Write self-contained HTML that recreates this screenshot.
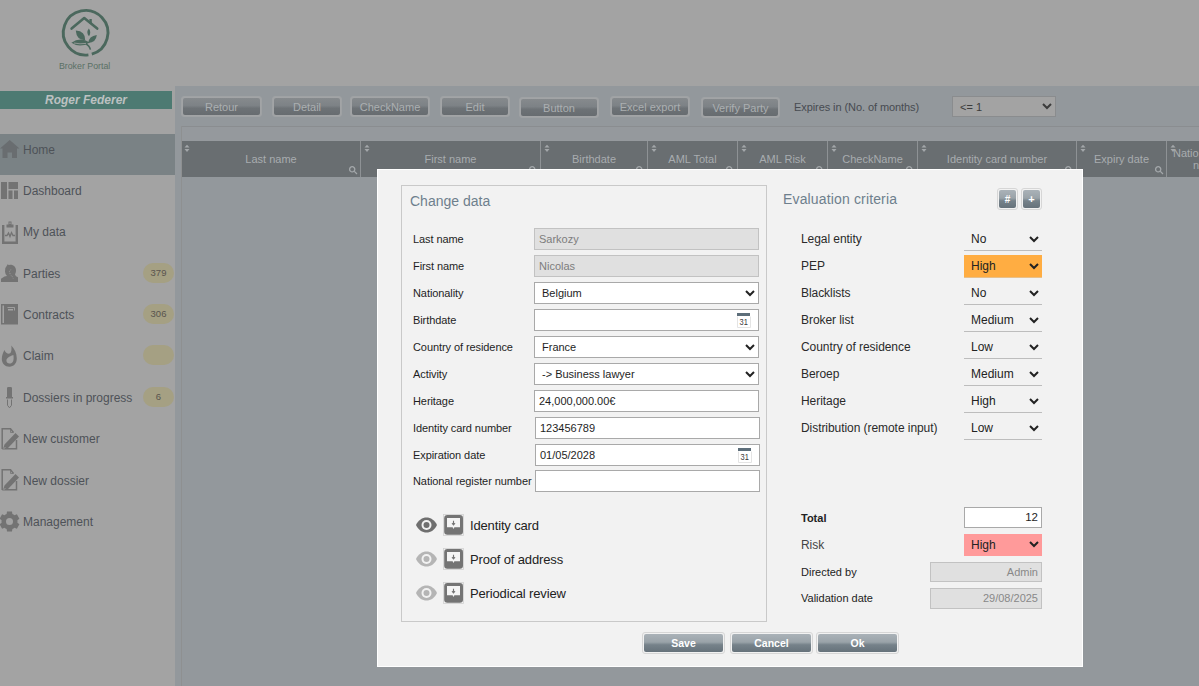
<!DOCTYPE html>
<html><head><meta charset="utf-8">
<style>
*{box-sizing:border-box;margin:0;padding:0}
html,body{width:1199px;height:686px;overflow:hidden}
body{position:relative;background:#a3a3a3;font-family:"Liberation Sans",sans-serif;color:#222}
.a{position:absolute}
svg{position:absolute;display:block}
/* sidebar */
.teal{left:0;top:91px;width:172px;height:18px;background:#4d7a72;color:#bcc1c1;font-weight:bold;font-style:italic;font-size:12px;line-height:18px;text-align:center}
.homerow{left:0;top:134px;width:175px;height:41px;background:#7a8285}
.mi{left:23px;font-size:12px;color:#4e5258;white-space:nowrap}
.badge{left:143px;width:31px;height:20px;border-radius:10px;background:#a5a083;color:#58544e;font-size:9.5px;line-height:19px;text-align:center}
/* content */
.content{left:175px;top:86px;width:1024px;height:600px;background:#93989c}
.tb{height:21px;border-radius:3px;border:1px solid #9fa2a4;padding:1px;background:#a2a4a6}.tb div{width:100%;height:100%;border-radius:2px;background:linear-gradient(#868a8d,#7d8286 45%,#6d7276 60%,#676c70);color:#abafb1;font-size:11px;line-height:18px;text-align:center;white-space:nowrap}
.tbar{left:181px;top:126px;width:1018px;height:15px;background:#95999d;border-top:1px solid #8a8d90;border-left:1px solid #8a8d90}
.thead{left:182px;top:141px;width:1017px;height:36px;background:#696e71}
.col{top:141px;height:36px;color:#a8acaf;font-size:11px;text-align:center;white-space:nowrap}
.div{top:141px;width:1px;height:36px;background:#8e9295}
/* modal */
.modal{left:377px;top:169px;width:706px;height:498px;background:#f2f2f2;border:1px solid #fff}
.fs{left:401px;top:185px;width:366px;height:437px;border:1px solid #c9c9c9}
.h{font-size:14px;color:#6e7f8d;white-space:nowrap}
.lbl{left:413px;font-size:11px;letter-spacing:-0.08px;color:#1e1e1e;white-space:nowrap}
.inp{left:534px;width:225px;height:22px;background:#fff;border:1px solid #a9a9a9;font-size:11px;line-height:20px;padding-left:4px;color:#1e1e1e;white-space:nowrap}
.dis{background:#e0e0e0;border-color:#c2c2c2;color:#7d7d7d}
.sel{padding-left:7px}
.elbl{left:801px;font-size:12px;letter-spacing:-0.06px;color:#2a2a2a;white-space:nowrap}
.esel{left:964px;width:78px;height:23px;border-bottom:1px solid #bdbdbd;font-size:12px;line-height:22px;padding-left:7px;color:#222}
.btn{top:632px;width:83px;height:22px;border-radius:3px;border:1px solid #d6d6d6;padding:1px}
.btn div{width:100%;height:100%;border-radius:2px;background:linear-gradient(#aab2b8 0%,#9aa3a9 45%,#76828a 60%,#66727b 100%);color:#fff;font-weight:bold;font-size:10.5px;line-height:18px;text-align:center}
.doc{font-size:13px;letter-spacing:-0.15px;color:#222;white-space:nowrap;left:470px}
</style></head>
<body>
<!-- logo -->
<svg style="left:55px;top:5px" width="60" height="70" viewBox="0 0 60 70">
  <path d="M33.4 49.9 A22.3 22.3 0 1 1 36.8 49.2" fill="none" stroke="#4b685d" stroke-width="2.9"/>
  <path d="M16.6 23.6 L29.2 13 L42.2 23.6" fill="none" stroke="#4b685d" stroke-width="2.6" stroke-linecap="round" stroke-linejoin="round"/>
  <path d="M35.6 14 V18.5" fill="none" stroke="#4b685d" stroke-width="2.4"/>
  <g fill="#4b685d">
   <path d="M16.4 37.8 Q25 31.6 34.8 37.4 Q25 43.6 16.4 37.8 Z"/>
   <path d="M20.8 25.4 Q30.4 25.8 30.2 35.2 Q21.4 35 20.8 25.4 Z"/>
   <path d="M33.8 23.4 Q36.6 27 34 31.2 Q30.8 27.6 33.8 23.4 Z"/>
   <path d="M41.8 30 Q41.2 37.4 33.2 38 Q33.8 31.2 41.8 30 Z"/>
  </g>
  <path d="M20 38.2 Q26 36.2 30 38.2 Q34.6 40.6 35.4 44.6" fill="none" stroke="#4b685d" stroke-width="1.6"/>
  <path d="M19 38 Q25 39.4 31 38.4" fill="none" stroke="#a3a3a3" stroke-width="0.8"/>
  <text x="29.6" y="63.6" text-anchor="middle" font-family="Liberation Sans" font-size="8.8" fill="#5a7065">Broker Portal</text>
</svg>

<div class="a teal">Roger Federer</div>
<div class="a homerow"></div>

<!-- sidebar icons -->
<svg style="left:0;top:140px" width="20" height="19" viewBox="0 0 20 19"><path d="M0 8.5 L9.7 0 L19.5 8.5 L17 8.5 L17 18 L12 18 L12 12.5 L7.5 12.5 L7.5 18 L2.5 18 L2.5 8.5 Z" fill="#696d70"/></svg>
<div class="a mi" style="top:143px">Home</div>

<svg style="left:1px;top:182px" width="18" height="18" viewBox="0 0 18 18"><path d="M0 0H6V17H0Z M7.5 0H17V7H7.5Z M7.5 8.5H11.5V17H7.5Z M13 8.5H17V17H13Z" fill="#737373"/></svg>
<div class="a mi" style="top:184px">Dashboard</div>

<svg style="left:2px;top:221px" width="16" height="23" viewBox="0 0 16 23"><path d="M1.2 4V21.8H14.8V4" fill="none" stroke="#737373" stroke-width="2.4"/><path d="M4.5 3.5H11.5V6.5H4.5Z M6.5 0.5H9.5V3.5H6.5Z" fill="#737373"/><path d="M7.5 1.5H8.5V3H7.5Z" fill="#a3a3a3"/><path d="M3 14.5H5L6.5 12L8 15.5L9.5 11.5L11 14.5H13" fill="none" stroke="#737373" stroke-width="1.3"/></svg>
<div class="a mi" style="top:225px">My data</div>

<svg style="left:1px;top:264px" width="18" height="18" viewBox="0 0 18 18"><path d="M0 18V14.8L3.5 12.6L6 12Q4.2 10.5 4 7.5Q3.8 3.5 6 1.6L6.6 0.3L7.8 1Q9 0.6 10.5 0.8Q14.5 1.6 15 6Q15.2 8.5 14 10.5L15 12.3L17 13.3V18Z" fill="#737373"/><path d="M9.8 5.5L8.3 7.8L9.5 10.8L11.5 12.8L12.2 14.5" stroke="#a3a3a3" stroke-width="0.7" fill="none" stroke-dasharray="1.1 0.9"/></svg>
<div class="a mi" style="top:267px">Parties</div>
<div class="a badge" style="top:263px">379</div>

<svg style="left:1px;top:304px" width="18" height="21" viewBox="0 0 18 21"><path d="M0 0H17V20.5H0Z" fill="#737373"/><path d="M1.5 1.5H3V19H1.5Z" fill="#a3a3a3"/><path d="M6.5 3.5H13.5V6.5" stroke="#a3a3a3" stroke-width="0.9" fill="none"/><path d="M7 5H12V6.5H7Z" fill="#a3a3a3"/></svg>
<div class="a mi" style="top:308px">Contracts</div>
<div class="a badge" style="top:304px">306</div>

<svg style="left:1px;top:345px" width="17" height="22" viewBox="0 0 17 22"><path fill="#737373" fill-rule="evenodd" d="M10.3 0.6C13.5 4 15.8 8.5 15.8 13.5C15.8 18.5 12.5 21.7 8.5 21.7C4 21.7 0.8 18.5 0.8 14C0.8 10.5 2 7.5 3.5 5C4.5 7.5 6 8.8 7.8 8.8C9.8 8.8 11 6.5 10.3 0.6Z M12.4 9.9C12.8 12.5 12.6 15 12.2 16C11.5 17.8 10 18.6 8.6 18.6C6.8 18.6 5.4 17.3 5.4 15.5C5.4 13 8 11.5 12.4 9.9Z"/></svg>
<div class="a mi" style="top:349px">Claim</div>
<div class="a badge" style="top:345px"></div>

<svg style="left:5px;top:387px" width="9" height="22" viewBox="0 0 9 22"><path d="M2 10V1.2Q2 0 3.2 0H5.8Q7 0 7 1.2V10Z M1 10H8V11.5H1Z" fill="#737373"/><path d="M2.5 12.5V18.3L4.5 20.8L6.5 18.3V12.5" fill="none" stroke="#737373" stroke-width="1"/></svg>
<div class="a mi" style="top:391px">Dossiers in progress</div>
<div class="a badge" style="top:387px">6</div>

<svg style="left:1px;top:428px" width="18" height="22" viewBox="0 0 18 22"><path d="M1.2 21V0.8H9.5L12.5 4.5" fill="none" stroke="#737373" stroke-width="1.5"/><path d="M9.5 0.8V4.5H12.5" fill="none" stroke="#737373" stroke-width="0.8"/><path d="M15.5 12V20.8H1.2" fill="none" stroke="#737373" stroke-width="1.5"/><path d="M3.5 16.5L14.5 5L18 8.5L7 20Z M3.5 16.5L2.2 20.5L7 20" fill="#737373"/><path d="M2.5 21L4.5 19" stroke="#a3a3a3" stroke-width="0.8"/></svg>
<div class="a mi" style="top:432px">New customer</div>

<svg style="left:1px;top:469px" width="18" height="22" viewBox="0 0 18 22"><path d="M1.2 21V0.8H9.5L12.5 4.5" fill="none" stroke="#737373" stroke-width="1.5"/><path d="M9.5 0.8V4.5H12.5" fill="none" stroke="#737373" stroke-width="0.8"/><path d="M15.5 12V20.8H1.2" fill="none" stroke="#737373" stroke-width="1.5"/><path d="M3.5 16.5L14.5 5L18 8.5L7 20Z M3.5 16.5L2.2 20.5L7 20" fill="#737373"/><path d="M2.5 21L4.5 19" stroke="#a3a3a3" stroke-width="0.8"/></svg>
<div class="a mi" style="top:474px">New dossier</div>

<svg style="left:-1.2px;top:511px" width="21" height="21" viewBox="0 0 21 21"><path fill="#737373" fill-rule="evenodd" d="M7.63 3.03 L8.01 0.51 L12.99 0.51 L13.37 3.03 A8.0 8.0 0 0 1 15.53 4.28 L17.91 3.35 L20.40 7.66 L18.40 9.25 A8.0 8.0 0 0 1 18.40 11.75 L20.40 13.34 L17.91 17.65 L15.53 16.72 A8.0 8.0 0 0 1 13.37 17.97 L12.99 20.49 L8.01 20.49 L7.63 17.97 A8.0 8.0 0 0 1 5.47 16.72 L3.09 17.65 L0.60 13.34 L2.60 11.75 A8.0 8.0 0 0 1 2.60 9.25 L0.60 7.66 L3.09 3.35 L5.47 4.28 A8.0 8.0 0 0 1 7.63 3.03Z M10.5 7 A3.5 3.5 0 1 0 10.5 14 A3.5 3.5 0 1 0 10.5 7Z"/></svg>
<div class="a mi" style="top:515px">Management</div>

<!-- content -->
<div class="a content"></div>
<div class="a tb" style="left:181px;top:96px;width:81px"><div>Retour</div></div>
<div class="a tb" style="left:272px;top:96px;width:70px"><div>Detail</div></div>
<div class="a tb" style="left:350px;top:96px;width:80px"><div>CheckName</div></div>
<div class="a tb" style="left:440px;top:96px;width:70px"><div>Edit</div></div>
<div class="a tb" style="left:519px;top:97px;width:80px"><div>Button</div></div>
<div class="a tb" style="left:610px;top:96px;width:80px"><div>Excel export</div></div>
<div class="a tb" style="left:701px;top:97px;width:79px"><div>Verify Party</div></div>
<div class="a" style="left:794px;top:101px;font-size:11px;letter-spacing:-0.08px;color:#474b51;white-space:nowrap">Expires in (No. of months)</div>
<div class="a" style="left:952px;top:96px;width:104px;height:21px;background:#a3a3a3;border:1px solid #8a8c8e;font-size:11px;line-height:20px;padding-left:7px;color:#3c3c3c">&lt;= 1</div>
<svg style="left:1042px;top:103px" width="10" height="7" viewBox="0 0 10 7"><path d="M1 1L5 5L9 1" fill="none" stroke="#3c3c3c" stroke-width="2"/></svg>
<div class="a tbar"></div>
<div class="a" style="left:181px;top:126px;width:1px;height:560px;background:#8e9091"></div>
<div class="a thead"></div>
<div class="a col" style="left:182px;width:178px;top:153px">Last name</div>
<svg style="left:184px;top:144px" width="6" height="9" viewBox="0 0 6 9"><path d="M0.5 3.6L3 0.7L5.5 3.6Z M0.5 5.1L3 8L5.5 5.1Z" fill="#a3a7aa"/></svg>
<svg style="left:349px;top:166px" width="9" height="9" viewBox="0 0 9 9"><path d="M3.2 0.7A2.6 2.6 0 1 0 3.2 5.9A2.6 2.6 0 1 0 3.2 0.7Z M5.1 5.1L8 8" fill="none" stroke="#a3a7aa" stroke-width="1.3"/></svg>
<div class="a div" style="left:360px"></div>
<div class="a col" style="left:361px;width:179px;top:153px">First name</div>
<svg style="left:364px;top:144px" width="6" height="9" viewBox="0 0 6 9"><path d="M0.5 3.6L3 0.7L5.5 3.6Z M0.5 5.1L3 8L5.5 5.1Z" fill="#a3a7aa"/></svg>
<svg style="left:529px;top:166px" width="9" height="9" viewBox="0 0 9 9"><path d="M3.2 0.7A2.6 2.6 0 1 0 3.2 5.9A2.6 2.6 0 1 0 3.2 0.7Z M5.1 5.1L8 8" fill="none" stroke="#a3a7aa" stroke-width="1.3"/></svg>
<div class="a div" style="left:540px"></div>
<div class="a col" style="left:541px;width:106px;top:153px">Birthdate</div>
<svg style="left:544px;top:144px" width="6" height="9" viewBox="0 0 6 9"><path d="M0.5 3.6L3 0.7L5.5 3.6Z M0.5 5.1L3 8L5.5 5.1Z" fill="#a3a7aa"/></svg>
<svg style="left:636px;top:166px" width="9" height="9" viewBox="0 0 9 9"><path d="M3.2 0.7A2.6 2.6 0 1 0 3.2 5.9A2.6 2.6 0 1 0 3.2 0.7Z M5.1 5.1L8 8" fill="none" stroke="#a3a7aa" stroke-width="1.3"/></svg>
<div class="a div" style="left:647px"></div>
<div class="a col" style="left:648px;width:89px;top:153px">AML Total</div>
<svg style="left:651px;top:144px" width="6" height="9" viewBox="0 0 6 9"><path d="M0.5 3.6L3 0.7L5.5 3.6Z M0.5 5.1L3 8L5.5 5.1Z" fill="#a3a7aa"/></svg>
<svg style="left:726px;top:166px" width="9" height="9" viewBox="0 0 9 9"><path d="M3.2 0.7A2.6 2.6 0 1 0 3.2 5.9A2.6 2.6 0 1 0 3.2 0.7Z M5.1 5.1L8 8" fill="none" stroke="#a3a7aa" stroke-width="1.3"/></svg>
<div class="a div" style="left:737px"></div>
<div class="a col" style="left:738px;width:89px;top:153px">AML Risk</div>
<svg style="left:741px;top:144px" width="6" height="9" viewBox="0 0 6 9"><path d="M0.5 3.6L3 0.7L5.5 3.6Z M0.5 5.1L3 8L5.5 5.1Z" fill="#a3a7aa"/></svg>
<svg style="left:816px;top:166px" width="9" height="9" viewBox="0 0 9 9"><path d="M3.2 0.7A2.6 2.6 0 1 0 3.2 5.9A2.6 2.6 0 1 0 3.2 0.7Z M5.1 5.1L8 8" fill="none" stroke="#a3a7aa" stroke-width="1.3"/></svg>
<div class="a div" style="left:827px"></div>
<div class="a col" style="left:828px;width:89px;top:153px">CheckName</div>
<svg style="left:831px;top:144px" width="6" height="9" viewBox="0 0 6 9"><path d="M0.5 3.6L3 0.7L5.5 3.6Z M0.5 5.1L3 8L5.5 5.1Z" fill="#a3a7aa"/></svg>
<svg style="left:906px;top:166px" width="9" height="9" viewBox="0 0 9 9"><path d="M3.2 0.7A2.6 2.6 0 1 0 3.2 5.9A2.6 2.6 0 1 0 3.2 0.7Z M5.1 5.1L8 8" fill="none" stroke="#a3a7aa" stroke-width="1.3"/></svg>
<div class="a div" style="left:917px"></div>
<div class="a col" style="left:918px;width:158px;top:153px">Identity card number</div>
<svg style="left:921px;top:144px" width="6" height="9" viewBox="0 0 6 9"><path d="M0.5 3.6L3 0.7L5.5 3.6Z M0.5 5.1L3 8L5.5 5.1Z" fill="#a3a7aa"/></svg>
<svg style="left:1065px;top:166px" width="9" height="9" viewBox="0 0 9 9"><path d="M3.2 0.7A2.6 2.6 0 1 0 3.2 5.9A2.6 2.6 0 1 0 3.2 0.7Z M5.1 5.1L8 8" fill="none" stroke="#a3a7aa" stroke-width="1.3"/></svg>
<div class="a div" style="left:1076px"></div>
<div class="a col" style="left:1077px;width:89px;top:153px">Expiry date</div>
<svg style="left:1080px;top:144px" width="6" height="9" viewBox="0 0 6 9"><path d="M0.5 3.6L3 0.7L5.5 3.6Z M0.5 5.1L3 8L5.5 5.1Z" fill="#a3a7aa"/></svg>
<svg style="left:1155px;top:166px" width="9" height="9" viewBox="0 0 9 9"><path d="M3.2 0.7A2.6 2.6 0 1 0 3.2 5.9A2.6 2.6 0 1 0 3.2 0.7Z M5.1 5.1L8 8" fill="none" stroke="#a3a7aa" stroke-width="1.3"/></svg>
<div class="a div" style="left:1166px"></div>
<div class="a col" style="left:1173px;top:147px;text-align:left;line-height:12px">Nation<br><span style="padding-left:20px">number</span></div>
<svg style="left:1170px;top:144px" width="6" height="9" viewBox="0 0 6 9"><path d="M0.5 3.6L3 0.7L5.5 3.6Z M0.5 5.1L3 8L5.5 5.1Z" fill="#a3a7aa"/></svg>
<div class="a modal"></div>
<div class="a fs"></div>
<div class="a h" style="left:410px;top:193px">Change data</div>
<div class="a h" style="left:783px;top:191px;letter-spacing:0.15px">Evaluation criteria</div>
<div class="a lbl" style="top:233px">Last name</div>
<div class="a inp dis" style="left:534px;top:228px">Sarkozy</div>
<div class="a lbl" style="top:260px">First name</div>
<div class="a inp dis" style="left:534px;top:255px">Nicolas</div>
<div class="a lbl" style="top:287px">Nationality</div>
<div class="a inp sel" style="left:534px;top:282px">Belgium</div>
<svg style="left:745px;top:290px" width="10" height="7" viewBox="0 0 10 7"><path d="M1 1L5 5L9 1" fill="none" stroke="#222" stroke-width="2"/></svg>
<div class="a lbl" style="top:314px">Birthdate</div>
<div class="a inp" style="left:534px;top:309px"></div>
<svg style="left:737px;top:313px" width="14" height="15" viewBox="0 0 14 15"><path d="M0 0H13V3H0Z" fill="#5d6e7a"/><path d="M0.5 3.5V14.5H13.5V3.5" fill="#fff" stroke="#e4e4e4" stroke-width="1"/><text x="7.6" y="12.3" text-anchor="middle" font-family="Liberation Sans" font-size="8.5" fill="#3a3a3a" transform="scale(0.88 1)">31</text></svg>
<div class="a lbl" style="top:341px">Country of residence</div>
<div class="a inp sel" style="left:534px;top:336px">France</div>
<svg style="left:745px;top:344px" width="10" height="7" viewBox="0 0 10 7"><path d="M1 1L5 5L9 1" fill="none" stroke="#222" stroke-width="2"/></svg>
<div class="a lbl" style="top:368px">Activity</div>
<div class="a inp sel" style="left:534px;top:363px">-&gt; Business lawyer</div>
<svg style="left:745px;top:371px" width="10" height="7" viewBox="0 0 10 7"><path d="M1 1L5 5L9 1" fill="none" stroke="#222" stroke-width="2"/></svg>
<div class="a lbl" style="top:395px">Heritage</div>
<div class="a inp" style="left:534px;top:390px">24,000,000.00€</div>
<div class="a lbl" style="top:422px">Identity card number</div>
<div class="a inp" style="left:535px;top:417px">123456789</div>
<div class="a lbl" style="top:449px">Expiration date</div>
<div class="a inp" style="left:535px;top:444px">01/05/2028</div>
<svg style="left:738px;top:448px" width="14" height="15" viewBox="0 0 14 15"><path d="M0 0H13V3H0Z" fill="#5d6e7a"/><path d="M0.5 3.5V14.5H13.5V3.5" fill="#fff" stroke="#e4e4e4" stroke-width="1"/><text x="7.6" y="12.3" text-anchor="middle" font-family="Liberation Sans" font-size="8.5" fill="#3a3a3a" transform="scale(0.88 1)">31</text></svg>
<div class="a lbl" style="top:475px">National register number</div>
<div class="a inp" style="left:535px;top:470px"></div>
<div class="a elbl" style="top:232px">Legal entity</div>
<div class="a esel" style="top:228px">No</div>
<svg style="left:1029px;top:236px" width="10" height="7" viewBox="0 0 10 7"><path d="M1 1L5 5L9 1" fill="none" stroke="#222" stroke-width="2"/></svg>
<div class="a elbl" style="top:259px">PEP</div>
<div class="a esel" style="top:255px;background:#ffad42;border-bottom-color:#e8c08a">High</div>
<svg style="left:1029px;top:263px" width="10" height="7" viewBox="0 0 10 7"><path d="M1 1L5 5L9 1" fill="none" stroke="#222" stroke-width="2"/></svg>
<div class="a elbl" style="top:286px">Blacklists</div>
<div class="a esel" style="top:282px">No</div>
<svg style="left:1029px;top:290px" width="10" height="7" viewBox="0 0 10 7"><path d="M1 1L5 5L9 1" fill="none" stroke="#222" stroke-width="2"/></svg>
<div class="a elbl" style="top:313px">Broker list</div>
<div class="a esel" style="top:309px">Medium</div>
<svg style="left:1029px;top:317px" width="10" height="7" viewBox="0 0 10 7"><path d="M1 1L5 5L9 1" fill="none" stroke="#222" stroke-width="2"/></svg>
<div class="a elbl" style="top:340px">Country of residence</div>
<div class="a esel" style="top:336px">Low</div>
<svg style="left:1029px;top:344px" width="10" height="7" viewBox="0 0 10 7"><path d="M1 1L5 5L9 1" fill="none" stroke="#222" stroke-width="2"/></svg>
<div class="a elbl" style="top:367px">Beroep</div>
<div class="a esel" style="top:363px">Medium</div>
<svg style="left:1029px;top:371px" width="10" height="7" viewBox="0 0 10 7"><path d="M1 1L5 5L9 1" fill="none" stroke="#222" stroke-width="2"/></svg>
<div class="a elbl" style="top:394px">Heritage</div>
<div class="a esel" style="top:390px">High</div>
<svg style="left:1029px;top:398px" width="10" height="7" viewBox="0 0 10 7"><path d="M1 1L5 5L9 1" fill="none" stroke="#222" stroke-width="2"/></svg>
<div class="a elbl" style="top:421px">Distribution (remote input)</div>
<div class="a esel" style="top:417px">Low</div>
<svg style="left:1029px;top:425px" width="10" height="7" viewBox="0 0 10 7"><path d="M1 1L5 5L9 1" fill="none" stroke="#222" stroke-width="2"/></svg>
<div class="a btn" style="left:997px;top:188px;width:21px;height:22px"><div style="font-size:10px;line-height:20px">#</div></div>
<div class="a btn" style="left:1021px;top:188px;width:21px;height:22px"><div style="font-size:11px;line-height:19px">+</div></div>
<div class="a" style="left:801px;top:512px;font-size:11px;font-weight:bold;color:#222">Total</div>
<div class="a inp" style="left:964px;top:507px;width:78px;height:21px;text-align:right;padding-right:3px;font-size:11.5px;line-height:19px">12</div>
<div class="a elbl" style="top:538px;color:#444">Risk</div>
<div class="a esel" style="top:534px;height:22px;background:#ff9a9a;border:none;line-height:22px">High</div>
<svg style="left:1029px;top:541px" width="10" height="7" viewBox="0 0 10 7"><path d="M1 1L5 5L9 1" fill="none" stroke="#222" stroke-width="2"/></svg>
<div class="a" style="left:801px;top:566px;font-size:11px;color:#222">Directed by</div>
<div class="a inp dis" style="left:930px;top:562px;width:112px;height:20px;text-align:right;padding-right:3px;line-height:18px;font-size:11px;color:#888">Admin</div>
<div class="a" style="left:801px;top:592px;font-size:11px;color:#222">Validation date</div>
<div class="a inp dis" style="left:930px;top:588px;width:112px;height:21px;text-align:right;padding-right:3px;line-height:19px;font-size:11px;color:#888">29/08/2025</div>
<div class="a btn" style="left:642px"><div>Save</div></div>
<div class="a btn" style="left:730px"><div>Cancel</div></div>
<div class="a btn" style="left:816px"><div>Ok</div></div>
<svg style="left:416px;top:517px" width="21" height="16" viewBox="0 0 21 16"><path d="M0 8C4.5 -2 16.5 -2 21 8C16.5 18 4.5 18 0 8Z" fill="#6f6f6f"/><circle cx="10.5" cy="8" r="5" fill="#f2f2f2"/><circle cx="10.5" cy="8" r="3" fill="#6f6f6f"/></svg>
<svg style="left:443px;top:514px" width="21" height="22" viewBox="0 0 21 22"><rect x="0.5" y="0.5" width="20" height="21" fill="none" stroke="#d0d0d0" stroke-width="0.8"/><rect x="1.2" y="1" width="18.8" height="19.8" rx="3.2" fill="#747474"/><path d="M4 4H17V13.2H11.4L10.5 15L9.6 13.2H4Z" fill="#f4f4f4"/><path d="M10.5 6.8V10.8M9 9.2L10.5 11L12 9.2" fill="none" stroke="#747474" stroke-width="1.1"/></svg>
<div class="a doc" style="top:518px">Identity card</div>
<svg style="left:416px;top:551px" width="21" height="16" viewBox="0 0 21 16"><path d="M0 8C4.5 -2 16.5 -2 21 8C16.5 18 4.5 18 0 8Z" fill="#b5b5b5"/><circle cx="10.5" cy="8" r="5" fill="#f2f2f2"/><circle cx="10.5" cy="8" r="3" fill="#b5b5b5"/></svg>
<svg style="left:443px;top:548px" width="21" height="22" viewBox="0 0 21 22"><rect x="0.5" y="0.5" width="20" height="21" fill="none" stroke="#d0d0d0" stroke-width="0.8"/><rect x="1.2" y="1" width="18.8" height="19.8" rx="3.2" fill="#747474"/><path d="M4 4H17V13.2H11.4L10.5 15L9.6 13.2H4Z" fill="#f4f4f4"/><path d="M10.5 6.8V10.8M9 9.2L10.5 11L12 9.2" fill="none" stroke="#747474" stroke-width="1.1"/></svg>
<div class="a doc" style="top:552px">Proof of address</div>
<svg style="left:416px;top:585px" width="21" height="16" viewBox="0 0 21 16"><path d="M0 8C4.5 -2 16.5 -2 21 8C16.5 18 4.5 18 0 8Z" fill="#b5b5b5"/><circle cx="10.5" cy="8" r="5" fill="#f2f2f2"/><circle cx="10.5" cy="8" r="3" fill="#b5b5b5"/></svg>
<svg style="left:443px;top:582px" width="21" height="22" viewBox="0 0 21 22"><rect x="0.5" y="0.5" width="20" height="21" fill="none" stroke="#d0d0d0" stroke-width="0.8"/><rect x="1.2" y="1" width="18.8" height="19.8" rx="3.2" fill="#747474"/><path d="M4 4H17V13.2H11.4L10.5 15L9.6 13.2H4Z" fill="#f4f4f4"/><path d="M10.5 6.8V10.8M9 9.2L10.5 11L12 9.2" fill="none" stroke="#747474" stroke-width="1.1"/></svg>
<div class="a doc" style="top:586px">Periodical review</div>

</body></html>
